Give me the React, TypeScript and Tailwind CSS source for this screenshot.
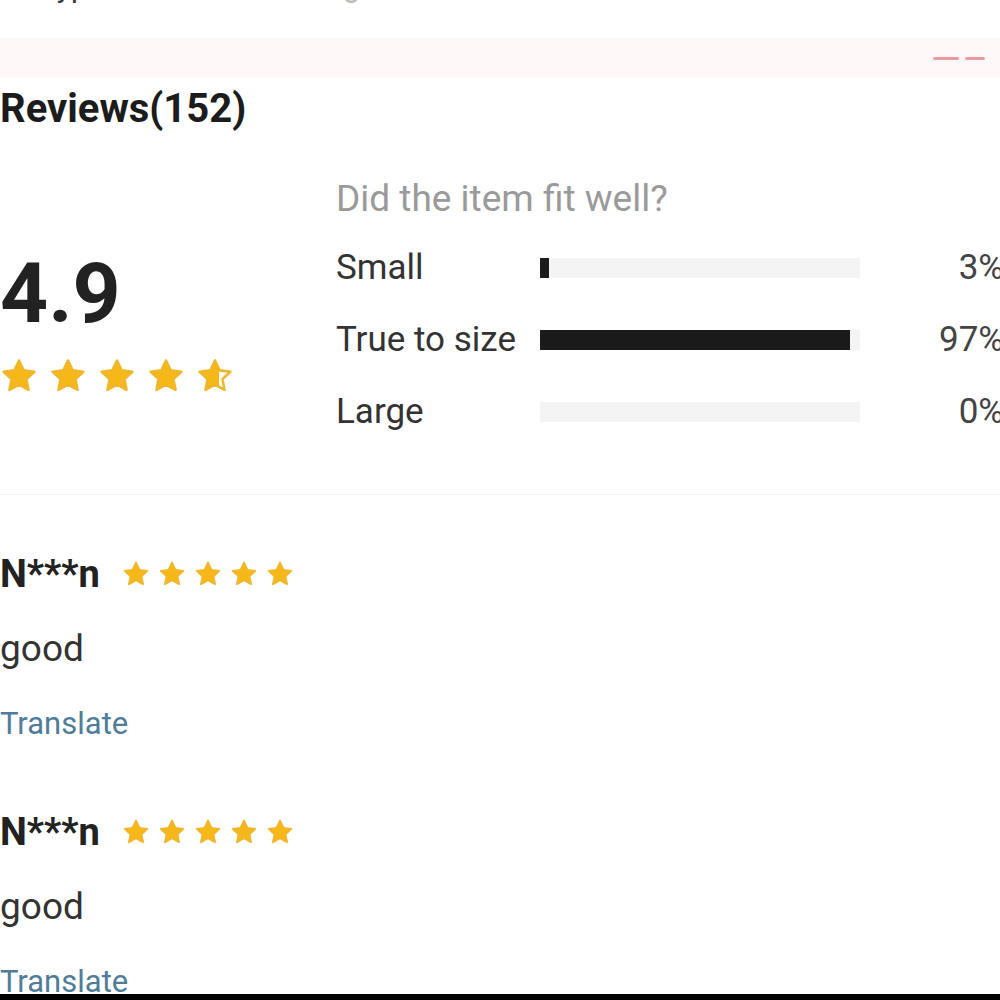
const STAR =
  "M12 2.2l2.95 6.25 6.75.85-4.98 4.7 1.3 6.75L12 17.4l-6.02 3.35 1.3-6.75L2.3 9.3l6.75-.85z";

function Star({ size, fill = 1, id }: { size: number; fill?: number; id?: string }) {
  const gid = `star-${id ?? "x"}`;
  return (
    <svg width={size} height={size} viewBox="0 0 24 24">
      {fill < 1 && (
        <defs>
          <linearGradient id={gid} x1="0" x2="1" y1="0" y2="0">
            <stop offset={fill} stopColor="#f5b818" />
            <stop offset={fill} stopColor="#ffffff" />
          </linearGradient>
        </defs>
      )}
      <path
        d={STAR}
        fill={fill < 1 ? `url(#${gid})` : "#f5b818"}
        stroke="#f1b62a"
        strokeWidth={1.6}
        strokeLinejoin="round"
      />
    </svg>
  );
}

const fit = [
  { label: "Small", pct: 3 },
  { label: "True to size", pct: 97 },
  { label: "Large", pct: 0 },
];

function Review({ name, text }: { name: string; text: string }) {
  return (
    <div className="pt-[59px] pb-[9px]">
      <div className="flex h-[40px] items-center">
        <span className="text-[38px] font-bold text-[#222]">{name}</span>
        <div className="ml-[22px] flex gap-[8px]">
          {[0, 1, 2, 3, 4].map((i) => (
            <Star key={i} size={28} />
          ))}
        </div>
      </div>
      <div className="mt-[35px] flex h-[40px] items-center text-[37px] text-[#333]">{text}</div>
      <div className="mt-[35px] flex h-[40px] items-center text-[31px] text-[#4f7c99]">Translate</div>
    </div>
  );
}

export default function App() {
  return (
    <div className="h-[1000px] w-full overflow-hidden bg-white font-['Roboto','Liberation_Sans',sans-serif]">
      <div className="h-[994px] w-[1004px] overflow-hidden">
        {/* tail of the spec table above */}
        <div className="h-[38px] overflow-hidden">
          <div className="-mt-[31px] flex text-[30px] leading-[36px]">
            <span className="ml-[40px] text-[#333]">Type</span>
            <span className="ml-[205px] text-[#bbb]">Regular Fit</span>
          </div>
        </div>
        <div className="flex h-[40px] items-center justify-end bg-[#fdf7f8] pr-[19px]">
          <div className="flex items-center gap-[6px] opacity-60">
            <div className="h-[3px] w-[26px] rounded-full bg-[#d9606e]" />
            <div className="h-[3px] w-[20px] rounded-full bg-[#d9606e]" />
          </div>
        </div>
        <div className="flex h-[62px] items-center">
          <h2 className="text-[40px] font-bold text-[#1c1c1c]">Reviews(152)</h2>
        </div>

        <div className="flex h-[355px] border-b border-[#f4f4f4]">
          <div className="w-[336px] pt-[109px]">
            <div className="flex h-[90px] items-center text-[84px] font-bold leading-none text-[#222]">4.9</div>
            <div className="mt-[18px] flex gap-[11px]">
              {[1, 1, 1, 1, 0.62].map((f, i) => (
                <Star key={i} size={38} fill={f} id={`big-${i}`} />
              ))}
            </div>
          </div>
          <div className="flex-1 pt-[34px]">
            <div className="flex h-[50px] items-center text-[37px] text-[#9a9a9a]">Did the item fit well?</div>
            <div className="mt-[8px]">
              {fit.map((row) => (
                <div key={row.label} className="flex h-[72px] items-center">
                  <span className="w-[204px] text-[35px] text-[#333]">{row.label}</span>
                  <div className="h-[20px] w-[320px] bg-[#f4f4f4]">
                    <div
                      className="h-full bg-[#1a1a1a]"
                      style={{ width: row.pct === 3 ? 9 : `${row.pct}%` }}
                    />
                  </div>
                  <span className="flex-1 text-right text-[35px] text-[#444]">{row.pct}%</span>
                </div>
              ))}
            </div>
          </div>
        </div>

        <Review name="N***n" text="good" />
        <Review name="N***n" text="good" />
      </div>
      <div className="h-[6px] bg-black" />
    </div>
  );
}
